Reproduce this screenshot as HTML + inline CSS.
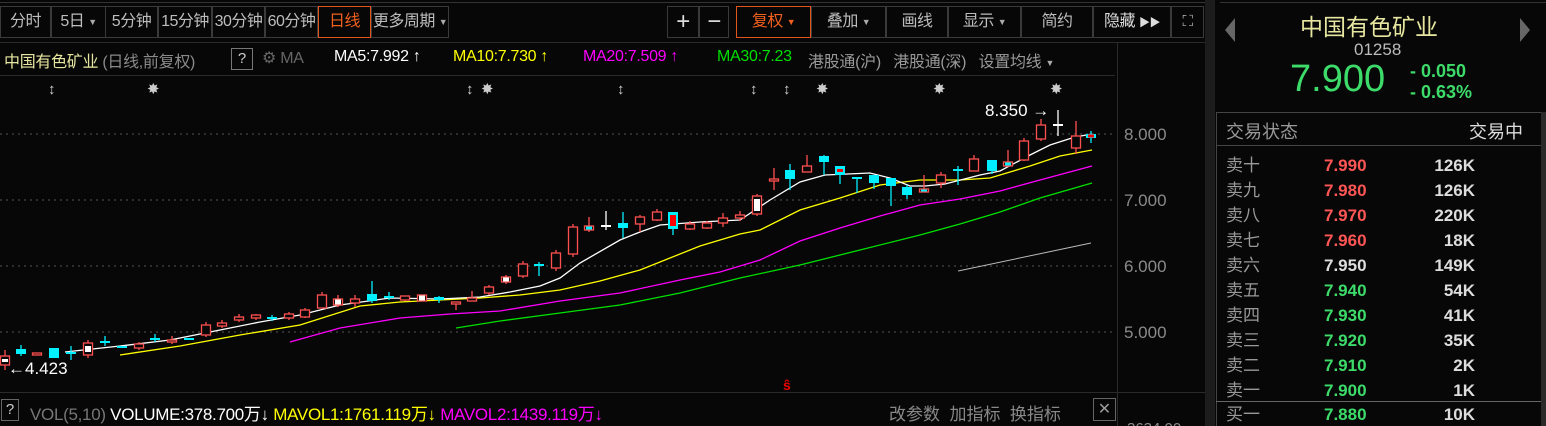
<!DOCTYPE html>
<html><head><meta charset="utf-8"><style>
*{margin:0;padding:0;box-sizing:border-box}
html,body{width:1546px;height:426px;overflow:hidden}
body{background:#070707;position:relative;font-family:"Liberation Sans","Noto Sans CJK SC",sans-serif;color:#a8a8a8}
.a{position:absolute;white-space:nowrap}
.btn{position:absolute;top:6px;height:32px;border:1px solid #3a3a3a;color:#bdbdbd;font-size:16px;line-height:30px;text-align:center;white-space:nowrap;overflow:hidden;letter-spacing:-0.5px}
.or{border-color:#e0561c;color:#f0601e}
.tri{font-size:9px;vertical-align:middle;color:#aaa}
.ma{top:48px;font-size:16px;letter-spacing:-0.3px}
.ob{position:absolute;left:1226px;font-size:17px;line-height:25px;white-space:nowrap}
</style></head><body>
<div class="a" style="left:0;top:2px;width:1205px;height:1px;background:#333"></div>
<div class="a" style="left:1220px;top:2px;width:326px;height:1px;background:#333"></div>
<div class="btn" style="left:0;width:51px">分时</div>
<div class="btn" style="left:51px;width:55px">5日 <span class="tri">▼</span></div>
<div class="btn" style="left:105px;width:53px">5分钟</div>
<div class="btn" style="left:158px;width:54px">15分钟</div>
<div class="btn" style="left:212px;width:53px">30分钟</div>
<div class="btn" style="left:265px;width:53px">60分钟</div>
<div class="btn or" style="left:318px;width:53px">日线</div>
<div class="btn" style="left:371px;width:78px">更多周期 <span class="tri">▼</span></div>
<div class="btn" style="left:667px;width:32px;font-size:24px;color:#ddd">+</div>
<div class="btn" style="left:699px;width:30px;font-size:24px;color:#ddd">−</div>
<div class="btn or" style="left:736px;width:75px">复权 <span class="tri" style="color:#f0601e">▼</span></div>
<div class="btn" style="left:811px;width:75px">叠加 <span class="tri">▼</span></div>
<div class="btn" style="left:886px;width:62px">画线</div>
<div class="btn" style="left:948px;width:73px">显示 <span class="tri">▼</span></div>
<div class="btn" style="left:1021px;width:72px">简约</div>
<div class="btn" style="left:1093px;width:78px;color:#ddd">隐藏 <span style="font-size:11px">▶▶</span></div>
<div class="btn" style="left:1171px;width:33px;font-size:15px;color:#bbb">⛶</div>
<div class="a" style="left:0;top:42px;width:1205px;height:1px;background:#2a2a2a"></div>
<div class="a ma" style="left:4px;color:#e6e6a0">中国有色矿业 <span style="color:#8a8a8a">(日线,前复权)</span></div>
<div class="a" style="left:231px;top:48px;width:22px;height:22px;border:1px solid #777;color:#ccc;font-size:15px;text-align:center;line-height:20px">?</div>
<div class="a ma" style="left:262px;color:#666">⚙ MA</div>
<div class="a ma" style="left:334px;color:#fff">MA5:7.992 ↑</div>
<div class="a ma" style="left:453px;color:#ffff00">MA10:7.730 ↑</div>
<div class="a ma" style="left:583px;color:#ff00ff">MA20:7.509 ↑</div>
<div class="a ma" style="left:717px;color:#00e000">MA30:7.23</div>
<div class="a ma" style="left:808px;color:#999">港股通(沪)&nbsp;&nbsp; 港股通(深)&nbsp;&nbsp; 设置均线 <span class="tri">▼</span></div>
<div class="a" style="left:0;top:75px;width:1115px;height:1px;background:#2a2a2a"></div>
<div class="a" style="left:1117px;top:43px;width:1px;height:383px;background:#2a2a2a"></div>
<div class="a" style="left:1205px;top:0;width:10px;height:426px;background:#1c1c1c"></div>
<svg class="a" style="left:0;top:0" width="1205" height="426" id="c">
<g stroke="#555" stroke-dasharray="2,4"><line x1="0" y1="134" x2="1115" y2="134"/><line x1="0" y1="200" x2="1115" y2="200"/><line x1="0" y1="266" x2="1115" y2="266"/><line x1="0" y1="332" x2="1115" y2="332"/></g>
<g fill="#ccc" font-size="15" font-family="Liberation Sans"><text x="48" y="94">↕</text><text x="147" y="94">✸</text><text x="466" y="94">↕</text><text x="481" y="94">✸</text><text x="617" y="94">↕</text><text x="750" y="94">↕</text><text x="783" y="94">↕</text><text x="816" y="94">✸</text><text x="933" y="94">✸</text><text x="1050" y="94">✸</text></g>
<polyline fill="none" stroke="#bbb" stroke-width="1" points="958,271 1091,243"/>
<polyline fill="none" stroke="#00e000" stroke-width="1.3" points="456,328 500,321 560,313 620,305 680,293 740,278 800,265 860,250 920,235 960,224 1000,212 1040,198 1092,183"/>
<polyline fill="none" stroke="#ff00ff" stroke-width="1.3" points="290,342 340,328 400,318 450,314 500,311 560,301 620,293 680,280 720,272 760,260 800,241 840,228 880,216 920,205 960,199 1000,191 1040,180 1092,166"/>
<polyline fill="none" stroke="#ffff00" stroke-width="1.3" points="120,355 180,346 240,335 300,325 360,306 400,302 440,300 480,298 520,295 560,290 600,281 640,270 660,262 700,246 740,234 760,230 800,210 840,198 880,185 920,180 960,180 990,178 1030,166 1060,156 1092,150"/>
<polyline fill="none" stroke="#fff" stroke-width="1.3" points="65,352 120,346 170,340 220,330 260,322 300,315 340,305 390,298 440,299 480,297 510,292 540,286 560,278 580,263 620,240 640,232 660,225 700,222 740,220 770,200 800,182 825,175 870,173 890,178 910,186 925,186 945,184 980,175 1000,171 1030,155 1050,145 1075,137 1092,134"/>
<text x="985" y="116" fill="#fff" font-size="17" font-family="Liberation Sans">8.350 →</text>
<text x="8" y="374" fill="#fff" font-size="17" font-family="Liberation Sans">←4.423</text>
<text x="783" y="390" fill="#e00" font-size="14" font-weight="bold" font-family="Liberation Sans">ŝ</text>
</svg>
<script>
var d=[[5,356,365,350,370,'rw'],[21,349,354,345,356,'c'],[37,353,355,353,355,'r'],[54,348,358,348,358,'c'],[71,352,354,346,360,'c'],[88,343,355,340,358,'rw'],[105,341,343,336,346,'c'],[122,346,348,346,348,'c'],[139,344,348,342,350,'r'],[155,338,340,334,342,'c'],[172,340,342,336,344,'r'],[189,338,340,338,340,'c'],[206,325,335,322,337,'r'],[222,323,326,320,328,'r'],[239,317,320,314,322,'r'],[256,315,318,314,320,'r'],[272,317,319,315,321,'c'],[289,314,318,312,320,'r'],[305,310,317,308,318,'r'],[322,295,308,292,308,'r'],[338,299,305,295,307,'rw'],[355,299,303,295,307,'r'],[372,294,301,281,303,'c'],[389,296,298,292,300,'c'],[405,296,300,296,301,'r'],[422,295,301,295,301,'rw'],[439,297,300,296,303,'c'],[456,302,304,302,310,'r'],[472,298,301,291,301,'r'],[489,287,293,285,295,'r'],[506,277,282,275,284,'rw'],[523,264,276,261,278,'r'],[539,264,266,262,276,'c'],[556,253,268,250,271,'r'],[573,227,254,224,257,'r'],[589,226,230,217,232,'rc'],[606,225,227,211,230,'w'],[623,223,228,212,238,'c'],[640,217,224,215,232,'r'],[657,212,220,209,221,'r'],[673,212,229,212,235,'cr'],[690,224,229,221,230,'r'],[707,223,228,221,229,'r'],[723,218,223,213,227,'r'],[740,215,218,211,221,'r'],[757,196,214,194,216,'rw'],[774,179,181,168,190,'r'],[790,170,179,164,190,'c'],[807,166,172,155,172,'r'],[824,156,162,155,175,'c'],[840,166,175,166,184,'cr'],[857,177,179,177,193,'c'],[874,175,183,175,189,'c'],[891,178,186,178,206,'c'],[907,187,195,185,199,'c'],[924,189,192,175,192,'rc'],[941,175,183,172,188,'r'],[958,169,171,166,185,'c'],[974,159,171,155,171,'r'],[992,160,171,160,174,'c'],[1008,162,166,150,167,'rc'],[1024,141,160,138,161,'r'],[1041,125,139,119,141,'r'],[1058,124,126,110,136,'w'],[1076,136,148,121,154,'r'],[1091,134,138,131,143,'cr']];
var s='',R='#ff5050',C='#00f0ff';
d.forEach(function(k){var x=k[0],t=k[1],b=k[2],wt=k[3],wb=k[4],ty=k[5];var col=ty[0]=='c'?C:ty[0]=='w'?'#fff':R;
s+='<line x1="'+x+'" y1="'+wt+'" x2="'+x+'" y2="'+wb+'" stroke="'+col+'" stroke-width="1.3"/>';
var h=Math.max(b-t,1.5);
if(ty[0]=='c')s+='<rect x="'+(x-5)+'" y="'+t+'" width="10" height="'+h+'" fill="'+C+'"/>';
else if(ty[0]=='w')s+='<rect x="'+(x-5)+'" y="'+t+'" width="10" height="'+h+'" fill="#fff"/>';
else s+='<rect x="'+(x-4.5)+'" y="'+t+'" width="9" height="'+h+'" fill="#070707" stroke="'+R+'" stroke-width="1.3"/>';
if(ty.length>1){var ic=ty[1]=='w'?'#fff':ty[1]=='c'?C:'#f00';s+='<rect x="'+(x-3)+'" y="'+(t+(h>6?3:0.5))+'" width="6" height="'+Math.max(h-(h>6?6:1),1.5)+'" fill="'+ic+'"/>';}
});
document.getElementById('c').insertAdjacentHTML('beforeend',s);
</script>
<div class="a" style="left:1124px;top:125px;font-size:17px;color:#8a8a8a">8.000</div>
<div class="a" style="left:1124px;top:191px;font-size:17px;color:#8a8a8a">7.000</div>
<div class="a" style="left:1124px;top:257px;font-size:17px;color:#8a8a8a">6.000</div>
<div class="a" style="left:1124px;top:323px;font-size:17px;color:#8a8a8a">5.000</div>
<div class="a" style="left:1127px;top:420px;font-size:15px;color:#8a8a8a">3634.00</div>
<div class="a" style="left:0;top:392px;width:1205px;height:1px;background:#2a2a2a"></div>
<div class="a" style="left:1px;top:399px;width:18px;height:22px;border:1px solid #666;color:#ccc;font-size:15px;text-align:center;line-height:20px">?</div>
<div class="a" style="left:30px;top:400px;font-size:17px;color:#777;letter-spacing:-0.3px">VOL(5,10) <span style="color:#fff">VOLUME:378.700万↓</span> <span style="color:#ffff00">MAVOL1:1761.119万↓</span> <span style="color:#ff00ff">MAVOL2:1439.119万↓</span></div>
<div class="a" style="left:889px;top:400px;font-size:17px;color:#888">改参数&nbsp;&nbsp;加指标&nbsp;&nbsp;换指标</div>
<div class="a" style="left:1093px;top:398px;width:23px;height:23px;border:1px solid #666;color:#999;font-size:16px;text-align:center;line-height:21px">✕</div>
<div class="a" style="left:1225px;top:18px;width:0;height:0;border-top:12px solid transparent;border-bottom:12px solid transparent;border-right:10px solid #666"></div>
<div class="a" style="left:1520px;top:18px;width:0;height:0;border-top:12px solid transparent;border-bottom:12px solid transparent;border-left:10px solid #666"></div>
<div class="a" style="left:1300px;top:8px;font-size:23px;color:#e6e6a0">中国有色矿业</div>
<div class="a" style="left:1354px;top:40px;font-size:17px;color:#bbb">01258</div>
<div class="a" style="left:1290px;top:58px;font-size:38px;color:#3ddc6a">7.900</div>
<div class="a" style="left:1410px;top:61px;font-size:18px;line-height:21px;color:#3ddc6a;font-weight:bold">- 0.050<br>- 0.63%</div>
<div class="a" style="left:1216px;top:112px;width:330px;height:1px;background:#444"></div>
<div class="a" style="left:1216px;top:112px;width:1px;height:314px;background:#444"></div>
<div class="a" style="left:1216px;top:145px;width:325px;height:1px;background:#444"></div>
<div class="a" style="left:1541px;top:112px;width:5px;height:314px;background:#2a2a2a"></div>
<div class="a" style="left:1226px;top:118px;font-size:18px;color:#999">交易状态</div>
<div class="a" style="left:1469px;top:118px;font-size:18px;color:#ddd">交易中</div>
<div class="ob" style="top:153px;color:#999">卖十<br>卖九<br>卖八<br>卖七<br>卖六<br>卖五<br>卖四<br>卖三<br>卖二<br>卖一</div>
<div class="ob" style="left:1324px;top:153px;font-weight:bold"><span style="color:#ff5555">7.990<br>7.980<br>7.970<br>7.960</span><br><span style="color:#ddd">7.950</span><br><span style="color:#3ddc6a">7.940<br>7.930<br>7.920<br>7.910<br>7.900</span></div>
<div class="ob" style="left:1400px;width:75px;text-align:right;top:153px;font-weight:bold;color:#ddd">126K<br>126K<br>220K<br>18K<br>149K<br>54K<br>41K<br>35K<br>2K<br>1K</div>
<div class="a" style="left:1216px;top:401px;width:325px;height:1px;background:#666"></div>
<div class="ob" style="top:402px;color:#999">买一</div>
<div class="ob" style="left:1324px;top:402px;font-weight:bold;color:#3ddc6a">7.880</div>
<div class="ob" style="left:1400px;width:75px;text-align:right;top:402px;font-weight:bold;color:#ddd">10K</div>
</body></html>
